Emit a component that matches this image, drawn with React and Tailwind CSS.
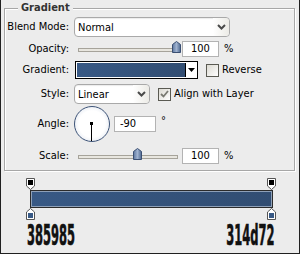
import React from "react";

// small blue "house" thumb used by the sliders
function Thumb() {
  return (
    <svg width="9" height="12" viewBox="0 0 9 12">
      <defs>
        <linearGradient id="tg" x1="0" y1="0" x2="1" y2="0">
          <stop offset="0" stopColor="#5d77a0" />
          <stop offset="0.5" stopColor="#9fb2cf" />
          <stop offset="1" stopColor="#4d678f" />
        </linearGradient>
      </defs>
      <path d="M4.5 0.5 L8.5 3.5 V11.5 H0.5 V3.5 Z" fill="url(#tg)" stroke="#3a4f72" />
    </svg>
  );
}

function Chevron() {
  return (
    <svg width="9" height="6" viewBox="0 0 9 6">
      <path d="M1 1 L4.5 4.5 L8 1" stroke="#4a4a4a" strokeWidth="2" fill="none" />
    </svg>
  );
}

function Select({ value, width }) {
  return (
    <div
      className={`${width} h-[20px] rounded-[4px] border border-[#a9a9a9] bg-white flex items-center justify-between pl-[3px] shadow-[inset_0_1px_1px_rgba(0,0,0,0.08)]`}
    >
      <span className="pt-[1px]">{value}</span>
      <span className="h-full w-[16px] flex items-center justify-center rounded-r-[4px] bg-gradient-to-r from-white to-[#ecebe6]">
        <Chevron />
      </span>
    </div>
  );
}

function Slider({ left }) {
  return (
    <div className="relative w-[108px] h-[16px]">
      <div className="absolute left-[4px] w-[100px] top-[7px] h-[4px] border border-[#a6a39a] bg-[#e8e6df]" />
      <div className="absolute top-0" style={{ left }}>
        <Thumb />
      </div>
    </div>
  );
}

function NumBox({ value, width, pad }) {
  return (
    <div className={`${width} h-[16px] border border-[#b3b3b3] bg-white flex items-center ${pad}`}>
      {value}
    </div>
  );
}

function Checkbox({ checked }) {
  return (
    <div className="w-[13px] h-[13px] border border-[#5a5a52] bg-gradient-to-br from-[#dcdad2] to-white flex items-center justify-center">
      {checked && (
        <svg width="9" height="8" viewBox="0 0 9 8">
          <path d="M1 4 L3.5 6.5 L8 1" stroke="#7a7a72" strokeWidth="1.8" fill="none" />
        </svg>
      )}
    </div>
  );
}

function Row({ label, className, children }) {
  return (
    <div className={`flex items-center ${className}`}>
      <div className="w-[64px] text-right mr-[5px]">{label}</div>
      {children}
    </div>
  );
}

// colour stop markers on the gradient bar
function TopStop() {
  return (
    <svg width="9" height="12" viewBox="0 0 9 12">
      <path d="M0.5 0.5 H8.5 V8 L4.5 11.5 L0.5 8 Z" fill="#fff" stroke="#555" />
      <rect x="2" y="2" width="5" height="5" fill="#000" />
    </svg>
  );
}

function BottomStop() {
  return (
    <svg width="9" height="12" viewBox="0 0 9 12">
      <path d="M4.5 0.5 L8.5 4 V11.5 H0.5 V4 Z" fill="#fff" stroke="#555" />
      <rect x="2" y="5" width="5" height="5" fill="#385985" />
    </svg>
  );
}

export default function App() {
  return (
    <div className="w-[300px] h-[254px] bg-[#ececec] border-l border-r border-b border-[#202020] text-[11px] leading-[14px] text-black font-['DejaVu_Sans_Condensed','DejaVu_Sans',sans-serif] overflow-hidden">
      {/* Gradient group box */}
      <div className="pt-[8px] pl-[3px] pr-[4px]">
        <div className="h-[163px] border border-[#a7a7a7] shadow-[inset_1px_1px_0_#fff,1px_1px_0_#fff]">
          <div className="-mt-[8px] ml-[13px] px-[3px] w-fit bg-[#ececec] font-bold text-[#333]">Gradient</div>

          <Row label="Blend Mode:" className="mt-[2px] h-[20px]">
            <Select value="Normal" width="w-[156px]" />
          </Row>

          <Row label="Opacity:" className="mt-[4px] h-[16px]">
            <Slider left={98} />
            <NumBox value="100" width="w-[37px]" pad="pl-[8px]" />
            <span className="ml-[5px]">%</span>
          </Row>

          <Row label="Gradient:" className="mt-[4px] h-[18px]">
            <div className="ml-[1px] w-[123px] h-[18px] border border-black bg-white p-[1px] flex">
              <div className="flex-1 bg-gradient-to-r from-[#385985] to-[#314d72]" />
              <div className="w-[11px] border-l border-black flex items-center justify-center">
                <svg width="7" height="4" viewBox="0 0 7 4">
                  <path d="M0 0 H7 L3.5 4 Z" fill="#000" />
                </svg>
              </div>
            </div>
            <div className="ml-[8px]">
              <Checkbox />
            </div>
            <span className="ml-[3px]">Reverse</span>
          </Row>

          <Row label="Style:" className="mt-[5px] h-[20px]">
            <Select value="Linear" width="w-[76px]" />
            <div className="ml-[8px]">
              <Checkbox checked />
            </div>
            <span className="ml-[3px]">Align with Layer</span>
          </Row>

          <Row label="Angle:" className="mt-[1px] h-[37px]">
            <div className="relative w-[36px] h-[36px] rounded-full border-[1.5px] border-[#3e5478] bg-[radial-gradient(circle,#ffffff_55%,#d3dbe8)]">
              <div className="absolute left-[16px] top-[16px] w-[1px] h-[18px] bg-black" />
              <div className="absolute left-[15px] top-[15px] w-[3px] h-[3px] bg-black" />
            </div>
            <div className="ml-[4px]">
              <NumBox value="-90" width="w-[42px]" pad="pl-[5px]" />
            </div>
            <span className="ml-[5px] -mt-[5px]">°</span>
          </Row>

          <Row label="Scale:" className="mt-[6px] h-[16px]">
            <Slider left={59} />
            <NumBox value="100" width="w-[37px]" pad="pl-[8px]" />
            <span className="ml-[5px]">%</span>
          </Row>
        </div>
      </div>

      {/* gradient editor bar */}
      <div className="mt-[7px] pl-[25px] pr-[23px] h-[12px] flex justify-between">
        <TopStop />
        <TopStop />
      </div>
      <div className="ml-[29px] w-[243px] h-[18px] border border-[#2b2b2b] shadow-[inset_0_0_0_1px_#8ea0b8] bg-gradient-to-r from-[#385985] to-[#314d72]" />
      <div className="pl-[25px] pr-[23px] h-[12px] flex justify-between">
        <BottomStop />
        <BottomStop />
      </div>
      <div className="mt-[3px] pl-[26px] pr-[25px] flex justify-between font-['DejaVu_Sans_Condensed',sans-serif] font-bold text-[29px] leading-[24px] [-webkit-text-stroke:0.6px_#111] text-[#111]">
        <span className="inline-block origin-left scale-x-[0.44]">385985</span>
        <span className="inline-block origin-right scale-x-[0.44]">314d72</span>
      </div>
    </div>
  );
}
